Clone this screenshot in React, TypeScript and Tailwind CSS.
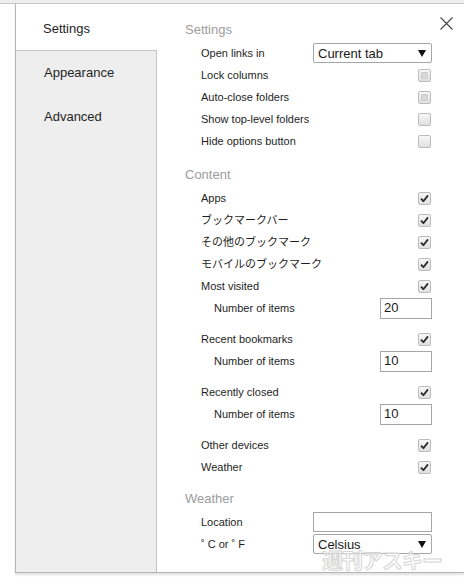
import React from "react";

const FONT = "font-['Liberation_Sans','Noto_Sans_CJK_JP',sans-serif]";

function Check({ checked, dim }: { checked?: boolean; dim?: boolean }) {
  return (
    <span className="w-[13px] h-[13px] rounded-[2px] border border-[#bcbcbc] bg-gradient-to-b from-[#f7f7f7] to-[#e0e0e0] flex items-center justify-center mr-[1px]">
      {dim && !checked && (
        <span className="w-[7px] h-[7px] rounded-[1px] bg-[#d8d8d8] border border-[#cccccc]" />
      )}
      {checked && (
        <svg width="9" height="9" viewBox="0 0 9 9">
          <path d="M1 4.6 L3.4 7.2 L8 1.4" fill="none" stroke="#2a2a2a" strokeWidth="1.8" strokeLinejoin="round" />
        </svg>
      )}
    </span>
  );
}

function Select({ label }: { label: string }) {
  return (
    <div className="w-[119px] h-[20px] border border-[#a6a6a6] rounded-[2px] bg-white flex items-center justify-between pl-[4px] pr-[5px]">
      <span className="text-[13px] text-[#1a1a1a] leading-none">{label}</span>
      <svg width="8" height="7" viewBox="0 0 8 7">
        <path d="M0 0 L8 0 L4 7 Z" fill="#111" />
      </svg>
    </div>
  );
}

function Box({ value, w }: { value?: string; w: number }) {
  return (
    <div
      className={`${w === 52 ? "w-[52px] h-[21px]" : "w-[119px] h-[20px]"} border border-[#a6a6a6] bg-white flex items-center pl-[3px] text-[13px] text-[#1a1a1a]`}
    >
      {value}
    </div>
  );
}

function Row({
  label,
  sub,
  children,
  extra,
}: {
  label: string;
  sub?: boolean;
  children?: React.ReactNode;
  extra?: string;
}) {
  return (
    <div
      className={`h-[22px] flex items-center justify-between ${sub ? "pl-[29px]" : "pl-[16px]"} ${extra ?? ""}`}
    >
      <span className="text-[11px] text-[#1e1e1e]">{label}</span>
      {children}
    </div>
  );
}

function Header({ label, extra }: { label: string; extra?: string }) {
  return (
    <div className={`h-[24px] flex items-center text-[13px] text-[#9c9c9c] ${extra ?? ""}`}>{label}</div>
  );
}

export default function App() {
  return (
    <div className={`w-[464px] h-[585px] bg-white relative overflow-hidden ${FONT}`}>
      <div className="h-[4px] bg-[#eeeeee] border-b border-[#c6c6c6]" />
      <div className="ml-[15px] h-[569px] border-l border-b border-[#b5b5b5] shadow-[0_2px_2px_rgba(0,0,0,0.12)] flex">
        <div className="w-[141px] flex flex-col">
          <div className="h-[46px] bg-white flex items-center pl-[27px] pt-[4px] text-[13px] text-[#1e1e1e]">
            Settings
          </div>
          <div className="flex-1 bg-[#eeeeee] border-t border-r border-[#c4c4c4] flex flex-col">
            <div className="h-[44px] flex items-center pl-[28px] text-[13px] text-[#1e1e1e]">Appearance</div>
            <div className="h-[44px] flex items-center pl-[28px] text-[13px] text-[#1e1e1e]">Advanced</div>
          </div>
        </div>
        <div className="flex-1 relative pt-[14px] pl-[28px] pr-[32px] flex flex-col">
          <svg className="absolute right-[11px] top-[13px]" width="13" height="13" viewBox="0 0 13 13">
            <path d="M0.5 0.5 L12.5 12.5 M12.5 0.5 L0.5 12.5" stroke="#444" strokeWidth="1.1" />
          </svg>

          <Header label="Settings" />
          <Row label="Open links in">
            <Select label="Current tab" />
          </Row>
          <Row label="Lock columns">
            <Check dim />
          </Row>
          <Row label="Auto-close folders">
            <Check dim />
          </Row>
          <Row label="Show top-level folders">
            <Check />
          </Row>
          <Row label="Hide options button">
            <Check />
          </Row>

          <Header label="Content" extra="mt-[11px]" />
          <Row label="Apps">
            <Check checked />
          </Row>
          <Row label="ブックマークバー">
            <Check checked />
          </Row>
          <Row label="その他のブックマーク">
            <Check checked />
          </Row>
          <Row label="モバイルのブックマーク">
            <Check checked />
          </Row>
          <Row label="Most visited">
            <Check checked />
          </Row>
          <Row label="Number of items" sub extra="mb-[9px]">
            <Box value="20" w={52} />
          </Row>
          <Row label="Recent bookmarks">
            <Check checked />
          </Row>
          <Row label="Number of items" sub extra="mb-[9px]">
            <Box value="10" w={52} />
          </Row>
          <Row label="Recently closed">
            <Check checked />
          </Row>
          <Row label="Number of items" sub extra="mb-[9px]">
            <Box value="10" w={52} />
          </Row>
          <Row label="Other devices">
            <Check checked />
          </Row>
          <Row label="Weather">
            <Check checked />
          </Row>

          <Header label="Weather" extra="mt-[9px]" />
          <Row label="Location">
            <Box w={119} />
          </Row>
          <Row label="˚ C or ˚ F">
            <Select label="Celsius" />
          </Row>
        </div>
      </div>
      <div className="absolute left-[322px] top-[544px] text-[21px] font-bold tracking-[-1px] font-['Noto_Sans_CJK_JP',sans-serif] text-[rgba(255,255,255,0.5)] [-webkit-text-stroke:1px_#d6d6d6] pointer-events-none">
        週刊アスキー
      </div>
    </div>
  );
}
